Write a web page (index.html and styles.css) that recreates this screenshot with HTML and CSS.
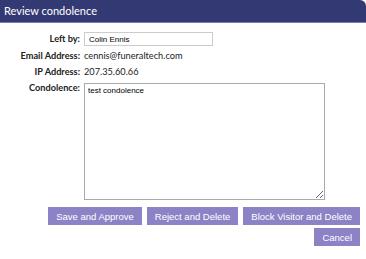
FILE: index.html
```html
<!DOCTYPE html>
<html lang="en">
<head>
    <meta charset="UTF-8">
    <title>Review condolence</title>
    <link rel="stylesheet" href="styles.css">
</head>
<body>
    <div class="dialog">
        <div class="dialog-title">Review condolence</div>

        <div class="dialog-body">
            <div class="field">
                <label class="field-label">Left by:</label>
                <input class="text-input" type="text" value="Colin Ennis">
            </div>
            <div class="field">
                <span class="field-label">Email Address:</span>
                <span class="field-value">cennis@funeraltech.com</span>
            </div>
            <div class="field">
                <span class="field-label">IP Address:</span>
                <span class="field-value">207.35.60.66</span>
            </div>
            <div class="field">
                <label class="field-label">Condolence:</label>
                <textarea class="text-area">test condolence</textarea>
            </div>

            <div class="actions">
                <button class="btn">Save and Approve</button>
                <button class="btn">Reject and Delete</button>
                <button class="btn">Block Visitor and Delete</button>
            </div>
            <div class="actions">
                <button class="btn">Cancel</button>
            </div>
        </div>
    </div>
</body>
</html>
```

FILE: styles.css
```css
body {
    margin: 0;
    background-color: #fff;
    font-family: Lato, "Open Sans", sans-serif;
}

.dialog {
    width: 366px;
    height: 259px;
    overflow: hidden;
}

.dialog-title {
    background-color: #333a73;
    border-bottom: 1px solid #7a80ad;
    border-top-right-radius: 6px;
    color: #fff;
    font-size: 11px;
    height: 23px;
    line-height: 21px;
    padding-left: 4px;
    box-sizing: border-box;
}

.dialog-body {
    padding: 9px 6px 0 0;
}

.field {
    display: flex;
    align-items: flex-start;
    margin-bottom: 3px;
    font-size: 9.2px;
}

.field-label {
    width: 80px;
    text-align: right;
    font-weight: bold;
    padding-right: 4px;
    line-height: 13px;
    color: #222;
}

.field-value {
    line-height: 13px;
    color: #222;
}

.text-input {
    width: 129px;
    height: 14px;
    box-sizing: border-box;
    border: 1px solid #ccc;
    font-family: "Liberation Sans", Arial, sans-serif;
    font-size: 8px;
    padding: 0 4px;
    margin: 0;
}

.text-area {
    width: 241px;
    height: 117px;
    box-sizing: border-box;
    border: 1px solid #aaa;
    font-family: "Liberation Sans", Arial, sans-serif;
    font-size: 8px;
    padding: 2px 3px;
    margin: 2px 0 0;
}

.actions {
    display: flex;
    justify-content: flex-end;
    gap: 5px;
    margin-top: 7px;
}

.actions + .actions {
    margin-top: 3px;
}

.btn {
    background-color: #8c83c6;
    border: none;
    color: #fff;
    font-family: "Liberation Sans", Arial, sans-serif;
    font-size: 9.5px;
    height: 18px;
    padding: 0 8px;
    margin: 0;
}
```
